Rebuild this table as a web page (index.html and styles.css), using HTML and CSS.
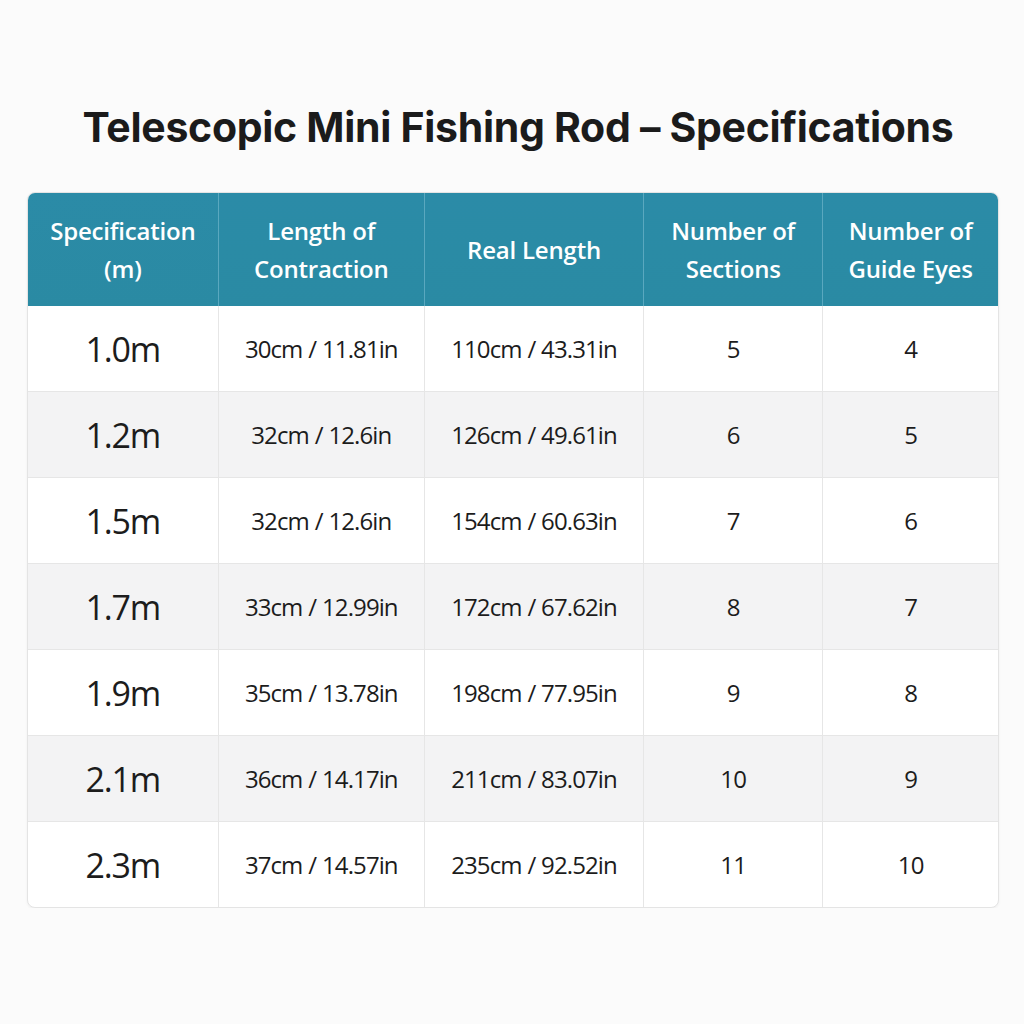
FILE: index.html
```html
<!DOCTYPE html>
<html lang="en">
<head>
    <meta charset="UTF-8">
    <meta name="viewport" content="width=device-width, initial-scale=1.0">
    <title>Telescopic Mini Fishing Rod - Specifications</title>
    <link rel="stylesheet" href="styles.css">
</head>
<body>
    <h1>Telescopic Mini Fishing Rod – Specifications</h1>

    <div class="card">
        <table class="specs">
            <colgroup>
                <col class="c1">
                <col class="c2">
                <col class="c3">
                <col class="c4">
                <col class="c5">
            </colgroup>
            <thead>
                <tr>
                    <th>Specification<br>(m)</th>
                    <th>Length of<br>Contraction</th>
                    <th>Real Length</th>
                    <th>Number of<br>Sections</th>
                    <th>Number of<br>Guide Eyes</th>
                </tr>
            </thead>
            <tbody>
                <tr><td class="size">1.0m</td><td>30cm / 11.81in</td><td>110cm / 43.31in</td><td>5</td><td>4</td></tr>
                <tr><td class="size">1.2m</td><td>32cm / 12.6in</td><td>126cm / 49.61in</td><td>6</td><td>5</td></tr>
                <tr><td class="size">1.5m</td><td>32cm / 12.6in</td><td>154cm / 60.63in</td><td>7</td><td>6</td></tr>
                <tr><td class="size">1.7m</td><td>33cm / 12.99in</td><td>172cm / 67.62in</td><td>8</td><td>7</td></tr>
                <tr><td class="size">1.9m</td><td>35cm / 13.78in</td><td>198cm / 77.95in</td><td>9</td><td>8</td></tr>
                <tr><td class="size">2.1m</td><td>36cm / 14.17in</td><td>211cm / 83.07in</td><td>10</td><td>9</td></tr>
                <tr><td class="size">2.3m</td><td>37cm / 14.57in</td><td>235cm / 92.52in</td><td>11</td><td>10</td></tr>
            </tbody>
        </table>
    </div>
</body>
</html>
```

FILE: styles.css
```css
body {
    margin: 0;
    padding: 0 27px;
    background-color: #fbfbfb;
    font-family: "Open Sans", Arial, sans-serif;
    color: #1c1c1c;
}
h1 {
    margin: 0;
    padding-top: 99px;
    padding-left: 12px;
    height: 192px;
    box-sizing: border-box;
    text-align: center;
    font-family: Inter, "Open Sans", sans-serif;
    font-size: 41px;
    font-weight: 700;
    letter-spacing: -0.3px;
    color: #1b1b1b;
    line-height: 56px;
}
.card {
    width: 970px;
    border: 1px solid #e4e4e4;
    border-radius: 8px;
    overflow: hidden;
    background-color: #fff;
    box-shadow: 0 1px 3px rgba(0, 0, 0, 0.05);
}
.specs {
    width: 100%;
    border-collapse: collapse;
    table-layout: fixed;
}
.c1 { width: 190px; }
.c2 { width: 206px; }
.c3 { width: 219px; }
.c4 { width: 179px; }
.c5 { width: 175px; }
.specs th {
    height: 113px;
    padding: 0;
    background: linear-gradient(180deg, #2b8ba7 0%, #2a8aa3 100%);
    color: #fff;
    font-family: "Open Sans", sans-serif;
    font-size: 24px;
    font-weight: 600;
    letter-spacing: -0.2px;
    line-height: 38px;
    border-left: 1px solid #5aa8bf;
}
.specs th:first-child {
    border-left: none;
}
.specs td {
    height: 85px;
    padding: 0;
    text-align: center;
    font-size: 24px;
    letter-spacing: -0.9px;
    word-spacing: 0.5px;
    border-left: 1px solid #e6e6e6;
    border-top: 1px solid #e6e6e6;
}
.specs td:first-child {
    border-left: none;
}
.specs tbody tr:first-child td {
    border-top: none;
}
.specs tbody tr:nth-child(even) td {
    background-color: #f3f3f4;
}
.specs td.size {
    font-size: 34px;
    letter-spacing: -1.2px;
    word-spacing: 0;
}
```
